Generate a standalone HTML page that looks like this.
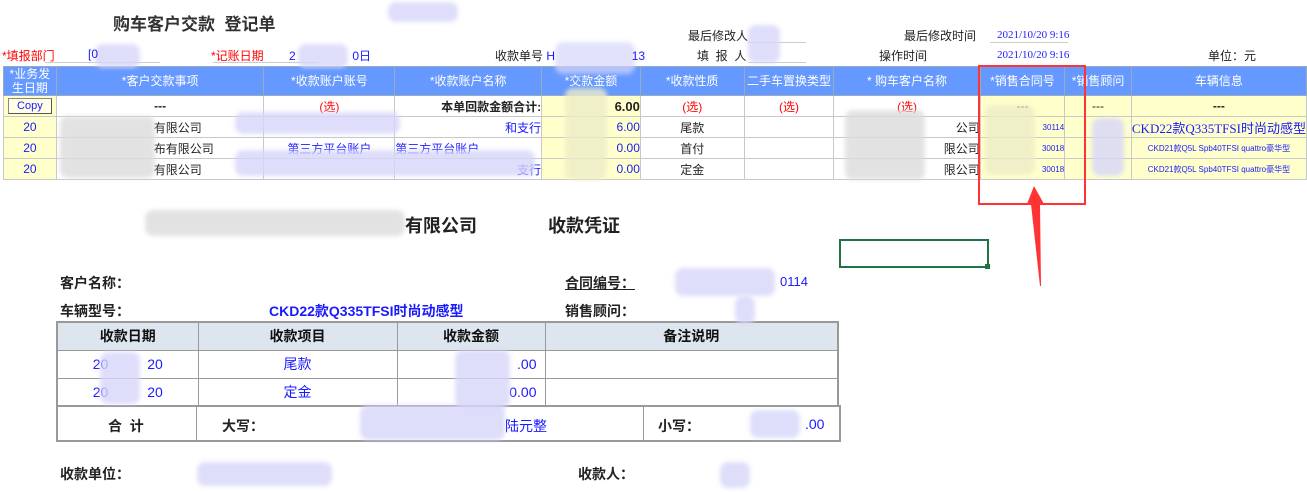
<!DOCTYPE html>
<html><head><meta charset="utf-8"><style>
*{margin:0;padding:0;box-sizing:border-box}
body{width:1307px;height:492px;background:#fff;position:relative;overflow:hidden;font-family:"Liberation Sans","Noto Sans CJK SC",sans-serif;font-size:12px;color:#222}
.a{position:absolute;white-space:pre;z-index:2}
.blur{position:absolute;background:#d6d6fa;border-radius:8px;filter:blur(2px);opacity:.8;z-index:1}
.gblur{position:absolute;background:#dcdcdc;border-radius:8px;filter:blur(2px);opacity:.8;z-index:1}
.yblur{position:absolute;background:#ededc8;border-radius:8px;filter:blur(2px);opacity:.8;z-index:1}
table{border-collapse:collapse;position:absolute;table-layout:fixed}
#t1{left:3px;top:66px}
#t1 td{border:1px solid #c8c8c8;height:21px;text-align:center;font-size:12px;overflow:hidden;white-space:nowrap}
#t1 tr.h td{background:#6699ff;color:#fff;height:28px;border-color:#9ab;font-size:12px;line-height:14px}
.y{background:#ffffcc}
.b{color:#1a1aff}
.r{color:#f00}
#t2{left:56px;top:321px;border:2px solid #999}
#t2 td{border:1px solid #999;height:28px;text-align:center;font-size:14px}
#t2 tr.h td{background:#dde6ee;font-weight:bold;color:#111}
</style></head><body>
<div class="a" style="left:113px;top:10px;font-size:17px;font-weight:bold;color:#333">购车客户交款  登记单</div>
<div class="blur" style="left:388px;top:2px;width:70px;height:20px"></div>
<div class="a" style="left:688px;top:27px;font-size:12px">最后修改人</div>
<div class="a" style="left:904px;top:27px">最后修改时间</div>
<div class="a b" style="left:997px;top:29px;font-size:11px;font-family:'Liberation Serif',serif">2021/10/20 9:16</div>
<div style="position:absolute;left:748px;top:42px;width:58px;border-top:1px solid #ccc"></div>
<div style="position:absolute;left:990px;top:42px;width:78px;border-top:1px solid #ccc"></div>
<div class="blur" style="left:748px;top:25px;width:32px;height:38px"></div>
<div class="a r" style="left:2px;top:47px">*填报部门</div>
<div class="a b" style="left:88px;top:47px">[0</div>
<div class="blur" style="left:95px;top:44px;width:45px;height:24px"></div>
<div class="a r" style="left:211px;top:47px">*记账日期</div>
<div class="a b" style="left:289px;top:47px">2                 0日</div>
<div class="blur" style="left:245px;top:44px;width:50px;height:24px;left:298px"></div>
<div class="a" style="left:495px;top:47px">收款单号 <span class="b">H                       13</span></div>
<div class="blur" style="left:555px;top:42px;width:80px;height:32px;opacity:.7"></div>
<div class="a" style="left:697px;top:47px">填  报  人</div>
<div class="a" style="left:879px;top:47px">操作时间</div>
<div class="a b" style="left:997px;top:49px;font-size:11px;font-family:'Liberation Serif',serif">2021/10/20 9:16</div>
<div class="a" style="left:1208px;top:47px">单位：元</div>
<div style="position:absolute;left:45px;top:62px;width:115px;border-top:1px solid #ccc"></div>
<div style="position:absolute;left:213px;top:62px;width:105px;border-top:1px solid #ccc"></div>
<div style="position:absolute;left:748px;top:62px;width:58px;border-top:1px solid #ccc"></div>
<table id="t1">
<colgroup><col style="width:53px"><col style="width:209px"><col style="width:132px"><col style="width:148px"><col style="width:100px"><col style="width:105px"><col style="width:90px"><col style="width:148px"><col style="width:85px"><col style="width:67px"><col style="width:165px"></colgroup>
<tr class="h"><td>*业务发<br>生日期</td><td>*客户交款事项</td><td>*收款账户账号</td><td>*收款账户名称</td><td>*交款金额</td><td>*收款性质</td><td>二手车置换类型</td><td>* 购车客户名称</td><td>*销售合同号</td><td>*销售顾问</td><td>车辆信息</td></tr>
<tr><td class="y"><span style="display:inline-block;border:1px solid #888;border-right-color:#555;border-bottom-color:#555;background:#ffffe8;color:#1a1aff;font-size:11px;padding:0 8px;line-height:14px">Copy</span></td><td><b>---</b></td><td class="r">(选)</td><td style="text-align:right;font-weight:bold">本单回款金额合计:</td><td class="y" style="text-align:right;font-weight:bold;font-size:13px">6.00</td><td class="r">(选)</td><td class="r">(选)</td><td class="r">(选)</td><td class="y">---</td><td class="y">---</td><td class="y"><b>---</b></td></tr>
<tr><td class="y b">20</td><td style="text-align:left;padding-left:97px">有限公司</td><td></td><td class="b" style="text-align:right">和支行</td><td class="y b" style="text-align:right">6.00</td><td>尾款</td><td></td><td style="text-align:right">公司</td><td class="y b" style="text-align:right;font-size:8px">30114</td><td class="y"></td><td class="y b" style="font-size:13px;font-family:'Liberation Serif','Noto Sans CJK SC',serif">CKD22款Q335TFSI时尚动感型</td></tr>
<tr><td class="y b">20</td><td style="text-align:left;padding-left:97px">布有限公司</td><td class="b">第三方平台账户</td><td class="b" style="text-align:left">第三方平台账户</td><td class="y b" style="text-align:right">0.00</td><td>首付</td><td></td><td style="text-align:right">限公司</td><td class="y b" style="text-align:right;font-size:8px">30018</td><td class="y"></td><td class="y b" style="font-size:8px">CKD21款Q5L Spb40TFSI quattro豪华型</td></tr>
<tr><td class="y b">20</td><td style="text-align:left;padding-left:97px">有限公司</td><td></td><td class="b" style="text-align:right">支行</td><td class="y b" style="text-align:right">0.00</td><td>定金</td><td></td><td style="text-align:right">限公司</td><td class="y b" style="text-align:right;font-size:8px">30018</td><td class="y"></td><td class="y b" style="font-size:8px">CKD21款Q5L Spb40TFSI quattro豪华型</td></tr>
</table>
<div class="gblur" style="left:60px;top:116px;width:95px;height:62px;z-index:3"></div>
<div class="blur" style="left:235px;top:112px;width:165px;height:22px;z-index:3"></div>
<div class="blur" style="left:235px;top:150px;width:300px;height:26px;z-index:3"></div>
<div class="yblur" style="left:565px;top:88px;width:42px;height:92px;z-index:3"></div>
<div class="gblur" style="left:845px;top:110px;width:80px;height:70px;z-index:3"></div>
<div class="yblur" style="left:985px;top:105px;width:50px;height:70px;z-index:3"></div>
<div class="blur" style="left:1092px;top:118px;width:32px;height:58px;z-index:3"></div>
<div style="position:absolute;left:978px;top:65px;width:108px;height:140px;border:2px solid #f33;z-index:4"></div>
<svg style="position:absolute;left:0;top:0;z-index:4" width="1307" height="492"><polygon points="1034,186 1027,204 1031,204 1040,286 1041,286 1040,204 1044,204" fill="#f33"/></svg>
<div class="gblur" style="left:145px;top:210px;width:260px;height:26px"></div>
<div class="a" style="left:405px;top:212px;font-size:18px;font-weight:bold">有限公司</div>
<div class="a" style="left:548px;top:212px;font-size:18px;font-weight:bold">收款凭证</div>
<div style="position:absolute;left:839px;top:239px;width:150px;height:29px;border:2px solid #217346"></div>
<div style="position:absolute;left:985px;top:264px;width:5px;height:5px;background:#217346"></div>
<div class="a" style="left:60px;top:273px;font-size:14px;font-weight:bold">客户名称：</div>
<div class="a" style="left:565px;top:273px;font-size:14px;font-weight:bold;text-decoration:underline">合同编号：</div>
<div class="a b" style="left:780px;top:274px;font-size:13px">0114</div>
<div class="blur" style="left:675px;top:268px;width:100px;height:28px"></div>
<div class="a" style="left:60px;top:301px;font-size:14px;font-weight:bold">车辆型号：</div>
<div class="a b" style="left:269px;top:301px;font-size:14px;font-weight:bold">CKD22款Q335TFSI时尚动感型</div>
<div class="a" style="left:565px;top:301px;font-size:14px;font-weight:bold">销售顾问：</div>
<div class="blur" style="left:735px;top:296px;width:20px;height:28px"></div>
<table id="t2">
<colgroup><col style="width:141px"><col style="width:199px"><col style="width:148px"><col style="width:293px"></colgroup>
<tr class="h"><td>收款日期</td><td>收款项目</td><td>收款金额</td><td>备注说明</td></tr>
<tr><td class="b" style="white-space:pre">20          20</td><td class="b">尾款</td><td class="b" style="text-align:right;padding-right:8px">.00</td><td></td></tr>
<tr><td class="b" style="white-space:pre">20          20</td><td class="b">定金</td><td class="b" style="text-align:right;padding-right:8px">0.00</td><td></td></tr>
</table>
<div style="position:absolute;left:56px;top:405px;width:785px;height:37px;border:2px solid #999"></div>
<div style="position:absolute;left:196px;top:405px;height:37px;border-left:1px solid #999"></div>
<div style="position:absolute;left:643px;top:405px;height:37px;border-left:1px solid #999"></div>
<div class="a" style="left:108px;top:416px;font-size:14px;font-weight:bold">合  计</div>
<div class="a" style="left:222px;top:416px;font-size:14px;font-weight:bold">大写：</div>
<div class="a b" style="left:505px;top:416px;font-size:14px">陆元整</div>
<div class="a" style="left:658px;top:416px;font-size:14px;font-weight:bold">小写：</div>
<div class="a b" style="left:805px;top:416px;font-size:14px">.00</div>
<div class="blur" style="left:100px;top:352px;width:40px;height:52px;z-index:3"></div>
<div class="blur" style="left:455px;top:350px;width:55px;height:58px;z-index:3"></div>
<div class="blur" style="left:360px;top:405px;width:145px;height:35px"></div>
<div class="blur" style="left:750px;top:410px;width:50px;height:28px"></div>
<div class="a" style="left:60px;top:464px;font-size:14px;font-weight:bold">收款单位：</div>
<div class="blur" style="left:197px;top:462px;width:135px;height:24px"></div>
<div class="a" style="left:578px;top:464px;font-size:14px;font-weight:bold">收款人：</div>
<div class="blur" style="left:720px;top:462px;width:30px;height:26px"></div>
</body></html>
